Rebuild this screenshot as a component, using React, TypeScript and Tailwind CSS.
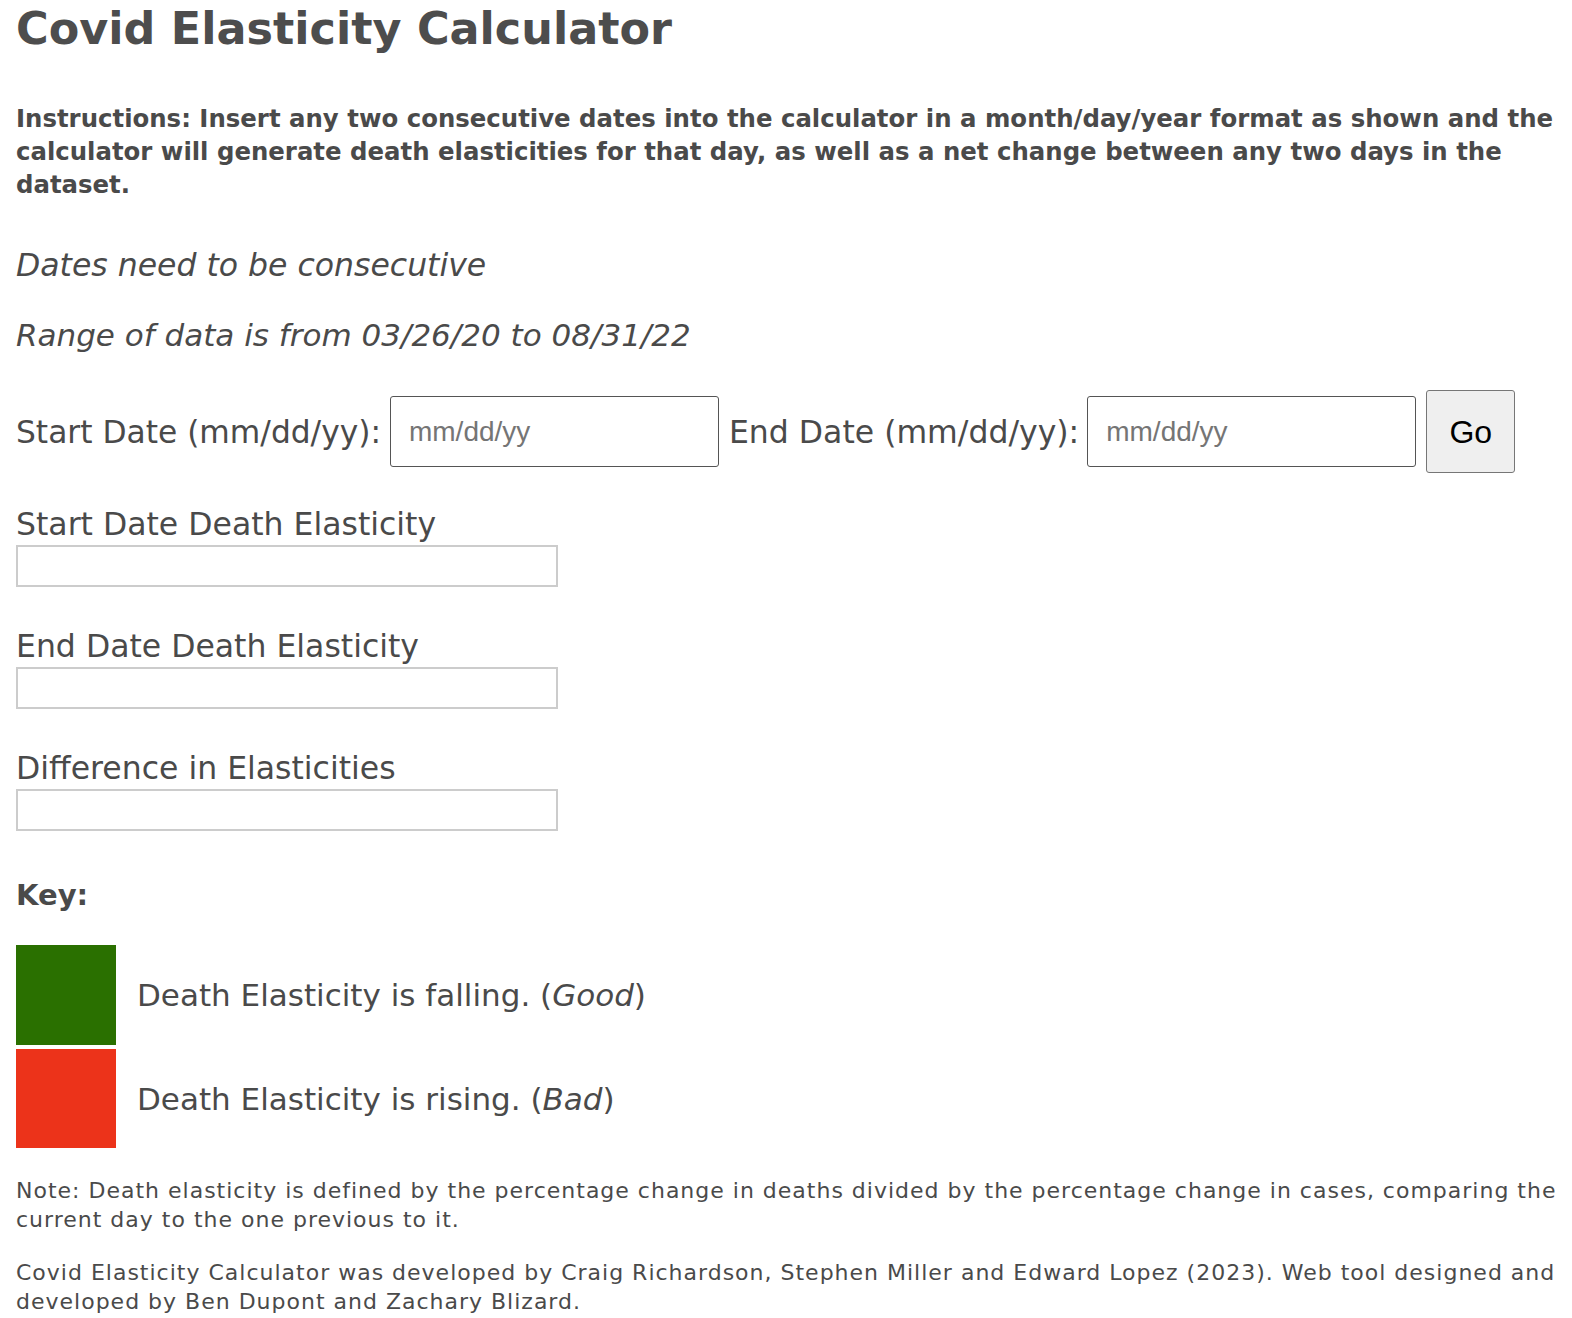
import React from 'react';

const font = { fontFamily: '"DejaVu Sans", "Open Sans", sans-serif' };

const ResultField: React.FC<{ label: string }> = ({ label }) => (
  <div className="flex flex-col">
    <label className="text-[31.5px] leading-[36px]">{label}</label>
    <input
      type="text"
      readOnly
      className="mt-[3px] w-[542px] h-[42px] border-2 border-[#cccccc] bg-white outline-none"
    />
  </div>
);

const App: React.FC = () => {
  return (
    <div className="min-h-screen bg-white pl-4 pr-[12px] text-[#4a4a4a]" style={font}>
      <h1 className="text-[44.5px] font-bold leading-[58px] text-[#4d4d4d]">Covid Elasticity Calculator</h1>

      <p className="mt-[44px] text-[24.4px] font-bold leading-[33px]">
        Instructions: Insert any two consecutive dates into the calculator in a month/day/year format as shown and the
        calculator will generate death elasticities for that day, as well as a net change between any two days in the
        dataset.
      </p>

      <p className="mt-[46px] text-[31.5px] italic leading-[36px]">Dates need to be consecutive</p>
      <p className="mt-[34px] text-[31px] italic leading-[36px]">Range of data is from 03/26/20 to 08/31/22</p>

      <div className="mt-[37px] flex items-center">
        <label className="text-[31.3px] leading-[36px]">Start Date (mm/dd/yy):</label>
        <input
          type="text"
          placeholder="mm/dd/yy"
          className="ml-[9px] w-[329px] h-[71px] rounded-[3px] border border-[#555555] px-[18px] text-[28px] text-[#333] placeholder:text-[#757575] font-['Liberation_Sans',sans-serif]"
        />
        <label className="ml-[10px] text-[31.5px] leading-[36px]">End Date (mm/dd/yy):</label>
        <input
          type="text"
          placeholder="mm/dd/yy"
          className="ml-[8px] w-[329px] h-[71px] rounded-[3px] border border-[#555555] px-[18px] text-[28px] text-[#333] placeholder:text-[#757575] font-['Liberation_Sans',sans-serif]"
        />
        <button className="ml-[10px] w-[89px] h-[83px] rounded-[3px] border border-[#767676] bg-[#efefef] text-[32px] text-black font-['Liberation_Sans',sans-serif]">
          Go
        </button>
      </div>

      <div className="mt-[33px] flex flex-col gap-[41px]">
        <ResultField label="Start Date Death Elasticity" />
        <ResultField label="End Date Death Elasticity" />
        <ResultField label="Difference in Elasticities" />
      </div>

      <h3 className="mt-[47px] text-[29px] font-bold leading-[34px]">Key:</h3>

      <div className="mt-[33px] flex flex-col gap-[4px]">
        <div className="flex items-center">
          <div className="w-[100px] h-[100px] bg-[#2a7000]" />
          <span className="ml-[21px] text-[31px] leading-[36px]">
            Death Elasticity is falling. (<em>Good</em>)
          </span>
        </div>
        <div className="flex items-center">
          <div className="w-[100px] h-[99px] bg-[#ec331a]" />
          <span className="ml-[21px] text-[31px] leading-[36px]">
            Death Elasticity is rising. (<em>Bad</em>)
          </span>
        </div>
      </div>

      <p className="mt-[28px] text-[22px] tracking-[1px] leading-[29px]">
        Note: Death elasticity is defined by the percentage change in deaths divided by the percentage change in cases,
        comparing the current day to the one previous to it.
      </p>
      <p className="mt-[24px] text-[22px] tracking-[1px] leading-[29px]">
        Covid Elasticity Calculator was developed by Craig Richardson, Stephen Miller and Edward Lopez (2023). Web tool
        designed and developed by Ben Dupont and Zachary Blizard.
      </p>
    </div>
  );
};

export default App;
